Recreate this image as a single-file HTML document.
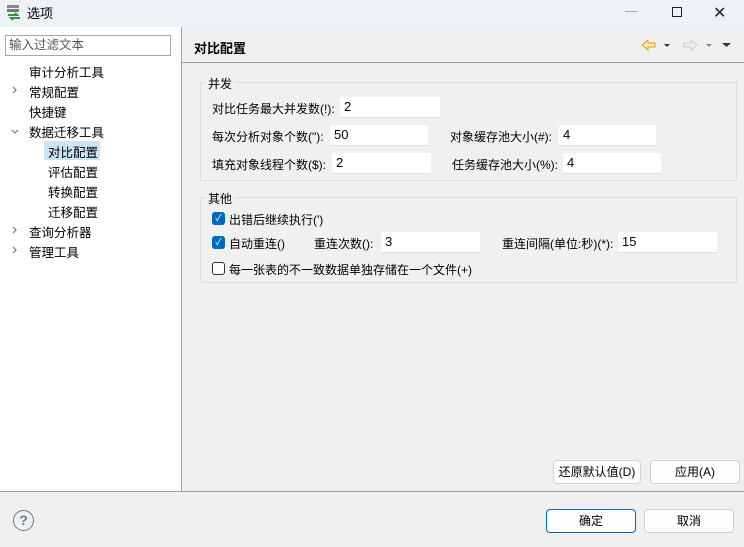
<!DOCTYPE html>
<html><head><meta charset="utf-8"><style>
*{box-sizing:border-box;margin:0;padding:0}
body{width:744px;height:547px;position:relative;background:#f0f0f0;font-family:"Liberation Sans","Noto Sans CJK SC",sans-serif;font-size:12px;color:#000;overflow:hidden}
.a{position:absolute;white-space:nowrap}
.in{position:absolute;background:#fff;border-bottom:1px solid #e0e0e0;padding-left:4px;line-height:20px;height:21px;font-size:13px}
.btn{position:absolute;background:#fdfdfd;border:1px solid #d0d0d0;border-radius:4px;text-align:center;line-height:22px}
.cb{position:absolute;width:13px;height:13px;border-radius:3px;background:#0067c0;color:#fff;font-size:9px;line-height:13px;text-align:center}
.grp{position:absolute;border:1px solid #dcdcdc}
</style></head><body>
<div class="a" style="left:0;top:0;width:744px;height:27px;background:#eef1f6"></div>
<svg class="a" style="left:7px;top:5px" width="14" height="16"><rect x="0" y="0" width="12" height="3" fill="#888"/><rect x="0" y="4" width="12" height="3" fill="#777"/><path d="M1 10h9l-2-2M13 13H4l2 2" stroke="#2a9a3a" stroke-width="2" fill="none"/></svg>
<div class="a" style="left:27px;top:3px;font-size:13px">选项</div>
<div class="a" style="left:625px;top:11px;width:12px;height:1px;background:#aaa"></div>
<div class="a" style="left:672px;top:7px;width:10px;height:10px;border:1.3px solid #222"></div>
<div class="a" style="left:713px;top:3px;font-size:16px;color:#222">✕</div>

<div class="a" style="left:0;top:27px;width:181px;height:464px;background:#fff"></div>
<div class="a" style="left:181px;top:27px;width:1px;height:464px;background:#a0a0a0"></div>
<div class="a" style="left:5px;top:35px;width:166px;height:21px;border:1px solid #a8a8a8;color:#555;padding-left:3px;line-height:19px;font-size:12.5px">输入过滤文本</div>
<svg class="a" style="left:0;top:60px" width="30" height="200" fill="none" stroke="#777" stroke-width="1.2">
<path d="M13 27l3 3-3 3"/><path d="M12 70l3 3 3-3"/><path d="M13 167l3 3-3 3"/><path d="M13 187l3 3-3 3"/></svg>
<div class="a" style="left:29px;top:62px;font-size:12.5px">审计分析工具</div>
<div class="a" style="left:29px;top:82px;font-size:12.5px">常规配置</div>
<div class="a" style="left:29px;top:102px;font-size:12.5px">快捷键</div>
<div class="a" style="left:29px;top:122px;font-size:12.5px">数据迁移工具</div>
<div class="a" style="left:44px;top:141px;width:56px;height:19px;background:#cce4f7"></div>
<div class="a" style="left:48px;top:142px;font-size:12.5px">对比配置</div>
<div class="a" style="left:48px;top:162px;font-size:12.5px">评估配置</div>
<div class="a" style="left:48px;top:182px;font-size:12.5px">转换配置</div>
<div class="a" style="left:48px;top:202px;font-size:12.5px">迁移配置</div>
<div class="a" style="left:29px;top:222px;font-size:12.5px">查询分析器</div>
<div class="a" style="left:29px;top:242px;font-size:12.5px">管理工具</div>

<div class="a" style="left:194px;top:38px;font-size:13px;font-weight:bold">对比配置</div>
<svg class="a" style="left:640px;top:38px" width="100" height="14"><path d="M2 7l6-5v3h7v4H8v3z" fill="#fde9a0" stroke="#d8a020"/><path d="M24 6h6l-3 3z" fill="#333"/><path d="M57 7l-6-5v3h-7v4h7v3z" fill="#f0f0f0" stroke="#ccc"/><path d="M66 6h6l-3 3z" fill="#888"/><path d="M82 5h9l-4.5 4z" fill="#334"/></svg>
<div class="a" style="left:182px;top:62px;width:562px;height:1px;background:#a0a0a0"></div>

<div class="grp" style="left:200px;top:82px;width:537px;height:99px"></div>
<div class="a" style="left:205px;top:75px;background:#f0f0f0;padding:0 3px">并发</div>
<div class="a" style="left:212px;top:100px">对比任务最大并发数(!):</div><div class="in" style="left:340px;top:97px;width:100px">2</div>
<div class="a" style="left:212px;top:128px">每次分析对象个数("):</div><div class="in" style="left:330px;top:125px;width:98px">50</div>
<div class="a" style="left:450px;top:128px">对象缓存池大小(#):</div><div class="in" style="left:559px;top:125px;width:97px">4</div>
<div class="a" style="left:212px;top:156px">填充对象线程个数($):</div><div class="in" style="left:332px;top:153px;width:99px">2</div>
<div class="a" style="left:452px;top:156px">任务缓存池大小(%):</div><div class="in" style="left:563px;top:153px;width:98px">4</div>

<div class="grp" style="left:200px;top:197px;width:537px;height:86px"></div>
<div class="a" style="left:205px;top:190px;background:#f0f0f0;padding:0 3px">其他</div>
<div class="cb" style="left:212px;top:212px">✓</div><div class="a" style="left:229px;top:211px">出错后继续执行(')</div>
<div class="cb" style="left:212px;top:236px">✓</div><div class="a" style="left:229px;top:235px">自动重连()</div>
<div class="a" style="left:314px;top:235px">重连次数():</div><div class="in" style="left:381px;top:232px;width:99px">3</div>
<div class="a" style="left:502px;top:235px">重连间隔(单位:秒)(*):</div><div class="in" style="left:618px;top:232px;width:99px">15</div>
<div class="a" style="left:212px;top:262px;width:13px;height:13px;border:1px solid #333;border-radius:3px;background:#fff"></div><div class="a" style="left:229px;top:261px">每一张表的不一致数据单独存储在一个文件(+)</div>

<div class="btn" style="left:553px;top:460px;width:88px">还原默认值(D)</div>
<div class="btn" style="left:650px;top:460px;width:90px">应用(A)</div>
<div class="a" style="left:0;top:491px;width:744px;height:1px;background:#a0a0a0"></div>
<div class="a" style="left:13px;top:510px;width:21px;height:21px;border:1.5px solid #6a7a90;border-radius:50%;text-align:center;line-height:18px;font-weight:bold;color:#6a7a90;font-size:14px">?</div>
<div class="btn" style="left:546px;top:509px;width:90px;height:24px;border-color:#0067c0">确定</div>
<div class="btn" style="left:644px;top:509px;width:90px;height:24px">取消</div>
</body></html>
